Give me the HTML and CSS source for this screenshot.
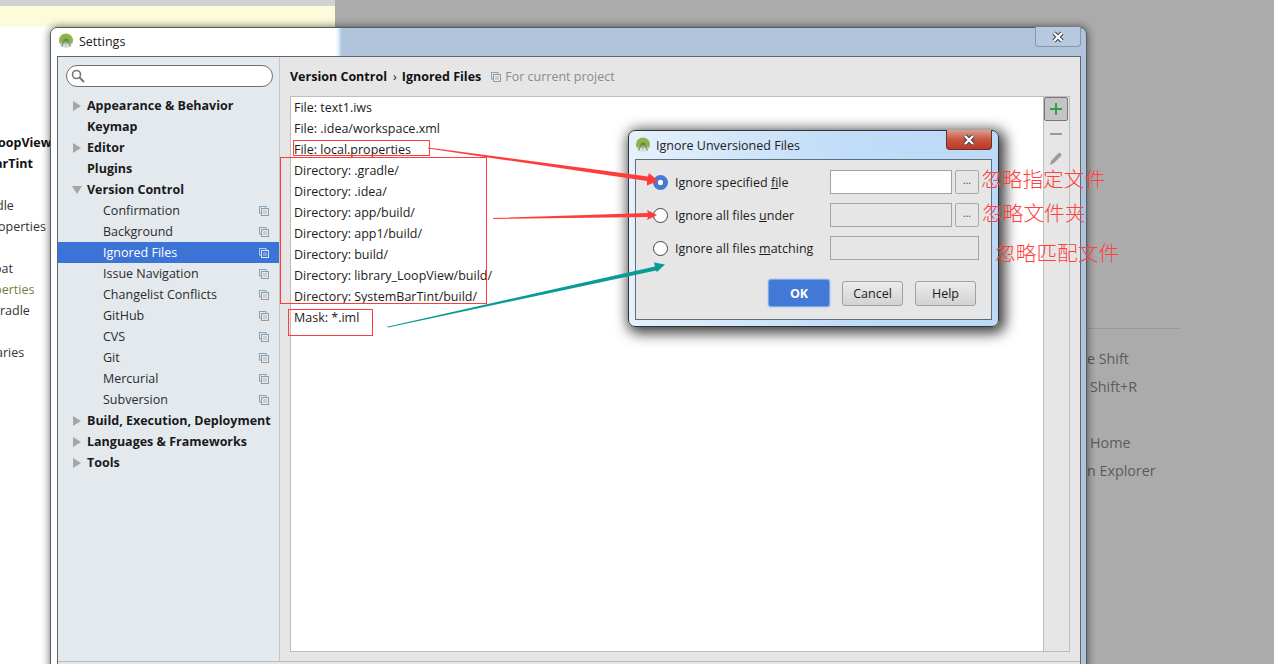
FILE: index.html
```html
<!DOCTYPE html>
<html lang="en">
<head>
<meta charset="utf-8">
<title>Settings</title>
<link rel="stylesheet" href="styles.css">
</head>
<body>
<svg class="defs" width="0" height="0" aria-hidden="true">
  <symbol id="copy" viewBox="0 0 10 10">
    <rect x="0.5" y="0.5" width="6.5" height="6.5" fill="none" stroke="var(--copy-back, #7da7c4)"/>
    <rect x="2.5" y="2.5" width="7" height="7" fill="var(--copy-bg, #e4e9ee)" stroke="var(--copy-front, #9a9a9a)"/>
    <path d="M4 5h4M4 7h4" stroke="var(--copy-lines, #b5b5b5)"/>
  </symbol>
  <symbol id="droid" viewBox="0 0 16 16">
    <circle cx="8" cy="7.500" r="7" fill="#8db54a"/>
    <path d="M1.600 10.500a7 7 0 0 0 12.800 0z" fill="#dfe3d2"/>
    <path d="M5 8.500a3 3 0 0 1 6 0z" fill="#6f8a3c"/>
    <path d="M6 8 3.600 13.500M10 8l2.400 5.500" stroke="#7b858c" stroke-width="1.200" fill="none"/>
    <path d="M8 8.500v4.500" stroke="#a5aaae" stroke-width="1"/>
  </symbol>
  <symbol id="close-x" viewBox="0 0 14 12">
    <path d="M3 2 11 10M11 2 3 10" stroke="#3c4044" stroke-width="4.400" fill="none"/>
    <path d="M3 2 11 10M11 2 3 10" stroke="#fff" stroke-width="2.400" fill="none"/>
  </symbol>
</svg>

<div class="desktop">
  <div class="ide-left">
    <div class="ide-strip"></div>
    <div class="ide-yellow"></div>
    <div class="ide-tree">
      <div class="ide-row ide-bold cut-2">oopView</div>
      <div class="ide-row ide-bold cut-5">arTint</div>
      <div class="ide-row"></div>
      <div class="ide-row cut-4">dle</div>
      <div class="ide-row cut-2">operties</div>
      <div class="ide-row"></div>
      <div class="ide-row cut-6">oat</div>
      <div class="ide-row ide-olive cut-6">perties</div>
      <div class="ide-row">radle</div>
      <div class="ide-row"></div>
      <div class="ide-row cut-4">aries</div>
    </div>
  </div>

  <div class="ide-right">
    <div class="hint">e Shift</div>
    <div class="hint hint-in">Shift+R</div>
    <div class="hint"></div>
    <div class="hint hint-in">Home</div>
    <div class="hint">n Explorer</div>
  </div>

  <div class="window">
    <div class="titlebar">
      <svg class="app-icon"><use href="#droid"/></svg>
      <span class="title-text">Settings</span>
      <span class="close-plain"><svg class="x-mark"><use href="#close-x"/></svg></span>
    </div>
    <div class="frame">
      <div class="panes">
        <aside class="sidebar">
          <div class="search">
            <svg class="search-icon" viewBox="0 0 14 14"><circle cx="5.500" cy="5.500" r="4" fill="none" stroke="#777" stroke-width="1.600"/><path d="M8.500 8.500 13 13" stroke="#777" stroke-width="2"/></svg>
          </div>
          <nav class="tree">
            <div class="node top"><i class="tri"></i>Appearance &amp; Behavior</div>
            <div class="node top"><i class="tri none"></i>Keymap</div>
            <div class="node top"><i class="tri"></i>Editor</div>
            <div class="node top"><i class="tri none"></i>Plugins</div>
            <div class="node top"><i class="tri open"></i>Version Control</div>
            <div class="node sub">Confirmation<svg class="copy"><use href="#copy"/></svg></div>
            <div class="node sub">Background<svg class="copy"><use href="#copy"/></svg></div>
            <div class="node sub selected">Ignored Files<svg class="copy"><use href="#copy"/></svg></div>
            <div class="node sub">Issue Navigation<svg class="copy"><use href="#copy"/></svg></div>
            <div class="node sub">Changelist Conflicts<svg class="copy"><use href="#copy"/></svg></div>
            <div class="node sub">GitHub<svg class="copy"><use href="#copy"/></svg></div>
            <div class="node sub">CVS<svg class="copy"><use href="#copy"/></svg></div>
            <div class="node sub">Git<svg class="copy"><use href="#copy"/></svg></div>
            <div class="node sub">Mercurial<svg class="copy"><use href="#copy"/></svg></div>
            <div class="node sub">Subversion<svg class="copy"><use href="#copy"/></svg></div>
            <div class="node top"><i class="tri"></i>Build, Execution, Deployment</div>
            <div class="node top"><i class="tri"></i>Languages &amp; Frameworks</div>
            <div class="node top"><i class="tri"></i>Tools</div>
          </nav>
        </aside>
        <main class="content">
          <div class="crumbs">
            <b>Version Control</b><span class="sep">›</span><b>Ignored Files</b>
            <svg class="copy crumb-copy"><use href="#copy"/></svg><span class="scope">For current project</span>
          </div>
          <div class="listbox">
            <ul class="files">
              <li>File: text1.iws</li>
              <li>File: .idea/workspace.xml</li>
              <li>File: local.properties</li>
              <li>Directory: .gradle/</li>
              <li>Directory: .idea/</li>
              <li>Directory: app/build/</li>
              <li>Directory: app1/build/</li>
              <li>Directory: build/</li>
              <li>Directory: library_LoopView/build/</li>
              <li>Directory: SystemBarTint/build/</li>
              <li>Mask: *.iml</li>
            </ul>
            <div class="tools">
              <button class="tool tool-add"><svg viewBox="0 0 14 14"><path d="M7 1v12M1 7h12" stroke="#2aa34a" stroke-width="2"/></svg></button>
              <button class="tool"><svg viewBox="0 0 14 14"><path d="M1 7h12" stroke="#999" stroke-width="2"/></svg></button>
              <button class="tool"><svg viewBox="0 0 14 14"><path d="M1 13l1-4 7-7.500a1.500 1.500 0 0 1 3 2.500l-7 7z" fill="#9c9c9c"/></svg></button>
            </div>
          </div>
        </main>
      </div>
    </div>
  </div>

  <div class="dialog">
    <div class="dlg-title">
      <svg class="app-icon"><use href="#droid"/></svg>
      <span class="dlg-title-text">Ignore Unversioned Files</span>
      <span class="close-red"><svg class="x-mark"><use href="#close-x"/></svg></span>
    </div>
    <div class="dlg-body">
      <div class="opt">
        <span class="radio checked"></span>
        <span class="opt-label">Ignore specified <u>f</u>ile</span>
        <span class="field white"></span>
        <span class="browse">...</span>
      </div>
      <div class="opt">
        <span class="radio"></span>
        <span class="opt-label">Ignore all files <u>u</u>nder</span>
        <span class="field"></span>
        <span class="browse">...</span>
      </div>
      <div class="opt">
        <span class="radio"></span>
        <span class="opt-label">Ignore all files <u>m</u>atching</span>
        <span class="field wide"></span>
      </div>
      <div class="dlg-actions">
        <button class="btn primary">OK</button>
        <button class="btn">Cancel</button>
        <button class="btn">Help</button>
      </div>
    </div>
  </div>

  <svg class="marks" viewBox="0 0 1274 664">
    <g fill="none" stroke="#ff3b3b" stroke-width="1">
      <rect x="293.500" y="140.500" width="136" height="15"/>
      <rect x="280.500" y="157.500" width="206" height="146"/>
      <rect x="288.500" y="309.500" width="84" height="26"/>
    </g>
    <path d="M428 147.500 648 176.500 649 173 658 181 647 185.500 647 181 428 148.500z" fill="#ff3b3b"/>
    <path d="M493 218 648 213 647 210 657 215 647 220 648 217 493 219z" fill="#ff3b3b"/>
    <path d="M387 326.700 655 266.500 654 262.500 665 264.500 657 272 656 270.500 388 327.500z" fill="#0a9b96"/>
  </svg>
  <span class="note note-a">忽略指定文件</span>
  <span class="note note-b">忽略文件夹</span>
  <span class="note note-c">忽略匹配文件</span>
</div>
</body>
</html>
```
FILE: styles.css
```css
* { box-sizing: border-box; }
html, body { margin: 0; padding: 0; }
body { font-family: "Open Sans", "Noto Sans", sans-serif; font-size: 12.500px; color: #1c1c1c; }
.defs { position: absolute; }
.desktop { position: relative; width: 1274px; height: 664px; overflow: hidden; background: #ababab; }

/* background IDE */
.ide-left { position: absolute; left: 0; top: 0; width: 335px; height: 664px; background: #fff; overflow: hidden; }
.ide-strip { height: 6px; background: #d2d2d2; }
.ide-yellow { height: 21px; background: #fdfbd9; }
.ide-tree { padding-top: 105px; }
.ide-row { height: 21px; line-height: 21px; color: #333; white-space: nowrap; }
.ide-bold { font-weight: 700; color: #111; }
.ide-olive { color: #7b7b45; }
.cut-2 { margin-left: -2px; }
.cut-4 { margin-left: -4px; }
.cut-5 { margin-left: -5px; }
.cut-6 { margin-left: -6px; }
.ide-right { position: absolute; left: 1087px; top: 328px; width: 94px; padding-top: 16px; border-top: 1px solid #999; }
.hint { height: 28px; line-height: 28px; font-size: 14.300px; color: #5c5c5c; white-space: nowrap; }
.hint-in { padding-left: 3px; }

/* settings window */
.window { position: absolute; left: 50px; top: 27px; width: 1037px; height: 680px; padding: 0 5px 0 6px;
  border: 1px solid #555c63; border-radius: 7px 7px 0 0; box-shadow: 0 0 9px rgba(0,0,0,.6);
  background: linear-gradient(90deg, #fff 0, #fff 27.500%, #dbeafa 27.800%, #afc3da 28.100%, #afc3da 100%); }
.titlebar { display: flex; align-items: center; height: 28px; position: relative; padding: 0 0 2px 1px; }
.app-icon { width: 16px; height: 16px; flex: none; }
.title-text { margin-left: 5px; font-size: 12.500px; color: #222; }
.close-plain { position: absolute; right: 0; top: -1px; width: 46px; height: 20px; display: flex; align-items: center; justify-content: center;
  border: 1px solid #8498ad; border-top: 0; border-radius: 0 0 4px 4px; background: #b7c9de; }
.x-mark { display: block; width: 14px; height: 12px; }
.frame { height: 650px; border: 1px solid #5f666d; background: #e6e6e6; }
.panes { display: flex; height: 605px; border-bottom: 1px solid #bbb; }

.sidebar { width: 222px; flex: none; padding-top: 8px; background: #e4e9ee; border-right: 1px solid #c4c8cc; }
.search { height: 22px; margin: 0 6px 0 8px; border: 1px solid #707070; border-radius: 11px; background: #fff; padding: 3px 0 0 4px; }
.search-icon { display: block; width: 14px; height: 14px; }
.tree { margin-top: 8px; }
.node { display: flex; align-items: center; height: 21px; white-space: nowrap; }
.node.top { font-weight: 700; padding-left: 15px; color: #1a1a1a; }
.node.sub { padding-left: 45px; color: #2b2b2b; }
.node .copy { margin-left: auto; margin-right: 10px; }
.node.selected { background: #3b74d6; color: #fff; --copy-bg: #3b74d6; --copy-back: #b9cdf0; --copy-front: #dfe7f6; --copy-lines: #b9cdf0; }
.tri { flex: none; width: 0; height: 0; margin-right: 6px; border-left: 8px solid #a6a6a6; border-top: 5px solid transparent; border-bottom: 5px solid transparent; }
.tri.none { border-color: transparent; }
.tri.open { width: 0; height: 0; border-left: 5px solid transparent; border-right: 5px solid transparent; border-top: 8px solid #a6a6a6; border-bottom: 0; margin-left: -1px; margin-right: 5px; }
.copy { width: 10px; height: 10px; flex: none; }

.content { flex: 1; min-width: 0; display: flex; flex-direction: column; padding: 0 10px 9px 10px; --copy-bg: #e6e6e6; }
.crumbs { display: flex; align-items: center; height: 39px; white-space: nowrap; color: #111; }
.crumbs b { font-weight: 700; }
.sep { margin: 0 5px 0 6px; }
.crumb-copy { margin: 0 4px 0 10px; }
.scope { color: #8c8c8c; }
.listbox { flex: 1; display: flex; border: 1px solid #bdbdbd; background: #fff; min-height: 0; }
.files { flex: 1; list-style: none; margin: 0; padding: 0 0 0 3px; }
.files li { height: 21px; line-height: 21px; color: #1c1c1c; white-space: nowrap; }
.tools { width: 26px; flex: none; display: flex; flex-direction: column; align-items: flex-start; gap: 1px; border-left: 1px solid #bdbdbd; background: #e6e6e6; }
.tool { width: 24px; height: 24px; padding: 4px 4px; border: 1px solid transparent; background: none; border-radius: 2px; }
.tool svg { display: block; width: 14px; height: 14px; }
.tool-add { background: #c4c4c4; border-color: #777; }

/* dialog */
.dialog { position: absolute; left: 628px; top: 130px; width: 371px; height: 197px; padding: 0 6px 6px;
  border: 1px solid #2f3438; border-radius: 7px; box-shadow: 3px 3px 14px 3px rgba(0,0,0,.78);
  background: linear-gradient(90deg, #e6f1fc 0, #bfdcf9 60%, #bcdaf8 100%); display: flex; flex-direction: column; }
.dlg-title { display: flex; align-items: center; height: 28px; position: relative; flex: none; padding-right: 0; }
.dlg-title-text { margin-left: 5px; color: #222; }
.close-red { position: absolute; right: 0; top: -1px; width: 46px; height: 20px; display: flex; align-items: center; justify-content: center;
  border: 1px solid #6e2f25; border-top: 0; border-radius: 0 0 4px 4px; background: linear-gradient(180deg, #d9a194 0, #c8553f 50%, #b93a26 100%); }
.dlg-body { flex: 1; display: flex; flex-direction: column; gap: 9px; padding: 10px 12px 12px 17px; background: #e6e6e6; border: 1px solid #5f6e7a; }
.opt { display: flex; align-items: center; height: 24px; }
.radio { flex: none; width: 15px; height: 15px; border-radius: 50%; border: 1px solid #444; background: #fff; }
.radio.checked { border: 0; background: radial-gradient(circle, #fff 0, #fff 2.400px, #4579d3 3px); }
.opt-label { flex: 1; margin-left: 7px; color: #1c1c1c; white-space: nowrap; }
.field { flex: none; width: 122px; height: 24px; border: 1px solid #a2a2a2; background: #e6e6e6; }
.field.white { background: #fff; }
.field.wide { width: 149px; }
.browse { flex: none; width: 24px; height: 24px; margin-left: 3px; border: 1px solid #a9a9a9; border-radius: 2px; text-align: center; font-size: 10px; line-height: 18px; color: #444; }
.dlg-actions { display: flex; align-items: center; justify-content: flex-end; gap: 12px; margin-top: auto; padding-right: 3px; }
.btn { width: 61px; height: 25px; padding: 0; font: inherit; color: #1c1c1c; border: 1px solid #a0a0a0; border-radius: 3px; background: linear-gradient(180deg, #ececec 0, #d2d2d2 100%); }
.btn.primary { width: 62px; height: 28px; font-weight: 700; color: #fff; border: 1px solid #7aa8e8; background: #4279d6; box-shadow: 0 0 2px #8db8ef; }

/* annotations */
.marks { position: absolute; left: 0; top: 0; width: 1274px; height: 664px; pointer-events: none; }
.note { position: absolute; font-family: "Noto Sans CJK SC", sans-serif; font-weight: 300; font-size: 20.700px; line-height: 24px; color: #ff4040; white-space: nowrap; }
.note-a { left: 981px; top: 166px; }
.note-b { left: 982px; top: 200px; }
.note-c { left: 995px; top: 240px; }
```
